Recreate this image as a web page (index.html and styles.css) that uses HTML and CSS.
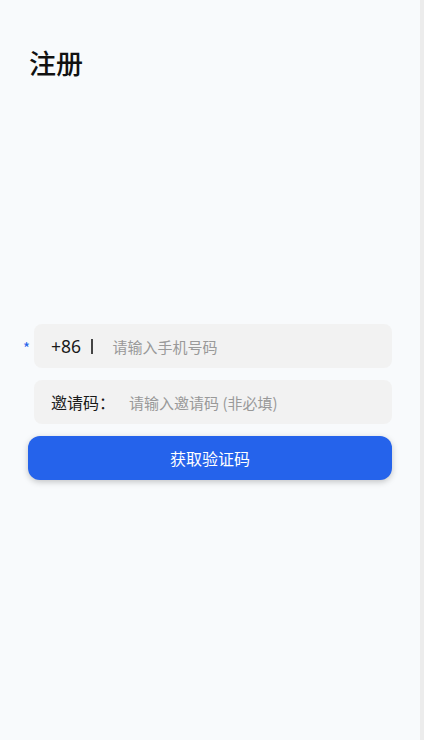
FILE: index.html
```html
<!DOCTYPE html>
<html lang="zh-CN">
<head>
<meta charset="utf-8">
<title>注册</title>
<link rel="stylesheet" href="styles.css">
</head>
<body>
<div class="screen">
  <main class="page">
    <h1 class="title">注册</h1>
    <form class="form">
      <div class="row">
        <span class="req">*</span>
        <label class="field">
          <span class="prefix">+86</span>
          <span class="sep"></span>
          <span class="placeholder">请输入手机号码</span>
        </label>
      </div>
      <div class="row">
        <span class="req"></span>
        <label class="field">
          <span class="label">邀请码：</span>
          <span class="placeholder">请输入邀请码 (非必填)</span>
        </label>
      </div>
      <button type="button" class="btn">获取验证码</button>
    </form>
  </main>
  <div class="scrollbar"></div>
</div>
</body>
</html>
```

FILE: styles.css
```css
* { box-sizing: border-box; }
html, body {
  margin: 0;
  padding: 0;
  height: 100%;
}
body {
  font-family: "Noto Sans CJK SC", "Noto Sans", sans-serif;
  background: #f8fafc;
  color: #111;
}
.screen {
  display: flex;
  height: 740px;
}
.page {
  flex: 1;
  background: #f8fafc;
}
.scrollbar {
  width: 4px;
  background: #ececec;
}
.title {
  margin: 0;
  padding: 44px 0 0 29px;
  font-size: 27px;
  line-height: 38px;
  font-weight: 500;
  color: #111;
}
.form {
  padding: 242px 28px 0 28px;
  display: flex;
  flex-direction: column;
  gap: 12px;
}
.row {
  display: flex;
  align-items: center;
  margin-left: -6px;
}
.req {
  width: 12px;
  color: #2563eb;
  font-size: 15px;
  line-height: 15px;
  padding-top: 2px;
  padding-left: 1px;
}
.field {
  flex: 1;
  height: 44px;
  background: #f2f2f2;
  border-radius: 8px;
  display: flex;
  align-items: center;
  padding: 0 17px;
}
.prefix {
  font-size: 17.5px;
  color: #1a1a1a;
  font-family: "Noto Sans", "Noto Sans CJK SC", sans-serif;
}
.sep {
  width: 1.5px;
  height: 15px;
  background: #444;
  margin: 0 20px 0 10px;
}
.placeholder {
  font-size: 15px;
  color: #999;
}
.label {
  font-size: 16px;
  color: #1a1a1a;
  margin-right: 14px;
}
.btn {
  height: 44px;
  border: none;
  border-radius: 12px;
  background: #2563eb;
  color: #fff;
  font-family: "Noto Sans CJK SC", sans-serif;
  font-size: 16px;
  font-weight: 400;
  box-shadow: 0 2px 6px rgba(0, 0, 0, 0.22);
}
```
